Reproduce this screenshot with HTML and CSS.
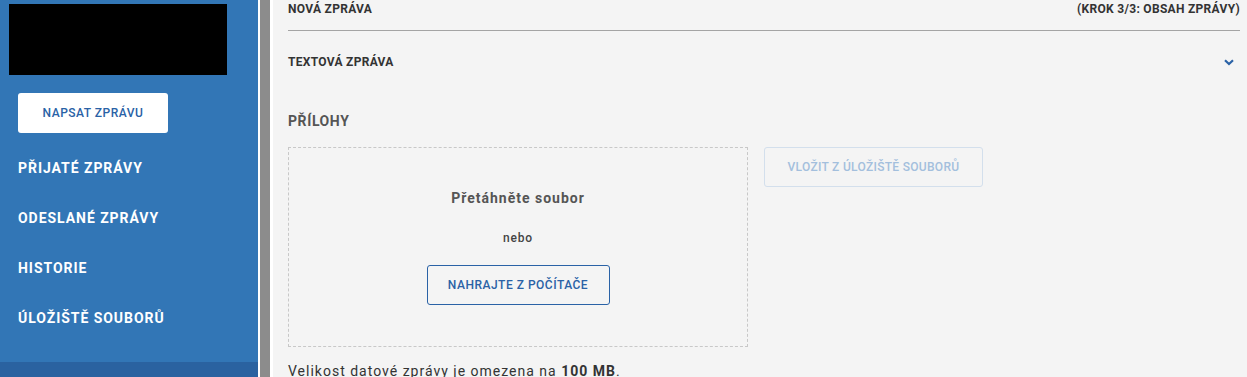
FILE: index.html
```html
<!DOCTYPE html>
<html lang="cs">
<head>
<meta charset="utf-8">
<link rel="stylesheet" href="styles.css">
</head>
<body>
<div class="app">
  <aside class="sidebar">
    <div class="logo"></div>
    <div class="compose-wrap"><button class="compose">NAPSAT ZPRÁVU</button></div>
    <nav class="nav">
      <a class="nav-item">PŘIJATÉ ZPRÁVY</a>
      <a class="nav-item">ODESLANÉ ZPRÁVY</a>
      <a class="nav-item">HISTORIE</a>
      <a class="nav-item">ÚLOŽIŠTĚ SOUBORŮ</a>
    </nav>
    <div class="sidebar-foot"></div>
  </aside>
  <div class="divider"><div class="divider-bar"></div></div>
  <main class="content">
    <div class="page-head">
      <span class="title">NOVÁ ZPRÁVA</span>
      <span class="step">(KROK 3/3: OBSAH ZPRÁVY)</span>
    </div>
    <div class="accordion">
      <span class="acc-title">TEXTOVÁ ZPRÁVA</span>
      <svg class="chev" width="10" height="7" viewBox="0 0 10 7"><path d="M1 1.2 L5 5 L9 1.2" fill="none" stroke="#2a62a6" stroke-width="2.2"/></svg>
    </div>
    <h2 class="section">PŘÍLOHY</h2>
    <div class="attach-row">
      <div class="dropzone">
        <div class="drop-title">Přetáhněte soubor</div>
        <div class="drop-or">nebo</div>
        <button class="btn-outline">NAHRAJTE Z POČÍTAČE</button>
      </div>
      <button class="btn-disabled">VLOŽIT Z ÚLOŽIŠTĚ SOUBORŮ</button>
    </div>
    <p class="note">Velikost datové zprávy je omezena na <b>100 MB</b>.</p>
  </main>
</div>
</body>
</html>
```
FILE: styles.css
```css
* { box-sizing: border-box; }
html, body { margin: 0; padding: 0; height: 100%; overflow: hidden; }
body { font-family: Roboto, "Liberation Sans", sans-serif; background: #f4f4f4; color: #333; }
.app { display: flex; height: 377px; }
.sidebar { width: 258px; flex: none; background: #3276b6; display: flex; flex-direction: column; }
.logo { width: 218px; height: 71px; background: #000; margin: 4px 0 0 9px; }
.compose-wrap { padding: 18px 0 0 18px; }
.compose { width: 150px; height: 40px; background: #fff; border: none; border-radius: 3px; color: #2a62a6; font: 500 12px Roboto, sans-serif; letter-spacing: 0.5px; padding: 0; }
.nav { display: flex; flex-direction: column; padding-top: 10px; }
.nav-item { display: block; height: 50px; line-height: 50px; padding-left: 18px; color: #fff; font-weight: 700; font-size: 14px; letter-spacing: 0.95px; }
.sidebar-foot { margin-top: auto; height: 15px; background: #2a62a0; }
.divider { width: 15px; flex: none; background: #fff; padding: 0 3px 0 2px; }
.divider-bar { height: 100%; background: #8c8c8c; }
.content { flex: 1; padding: 0 7px 0 15px; }
.page-head { display: flex; justify-content: space-between; align-items: flex-start; height: 31px; padding-top: 2px; border-bottom: 1px solid #a4a4a4; font-size: 12px; line-height: 14px; font-weight: 700; letter-spacing: 0.3px; color: #333; }
.accordion { display: flex; justify-content: space-between; align-items: center; height: 62px; font-size: 12px; font-weight: 700; letter-spacing: 0.3px; color: #333; padding-right: 6px; }
.section { margin: 20px 0 0; font-size: 14px; font-weight: 700; color: #555; letter-spacing: 0.6px; line-height: 16px; }
.attach-row { display: flex; align-items: flex-start; gap: 16px; margin-top: 18px; }
.dropzone { width: 460px; height: 200px; border: 1px dashed #c8c8c8; display: flex; flex-direction: column; align-items: center; padding-top: 42px; }
.drop-title { font-size: 14px; font-weight: 700; color: #555; letter-spacing: 1px; }
.drop-or { margin-top: 25px; font-size: 12px; font-weight: 500; color: #444; letter-spacing: 0.8px; }
.btn-outline { margin-top: 20px; width: 183px; height: 40px; background: transparent; border: 1px solid #2a62a6; border-radius: 3px; color: #2a62a6; font: 500 12px Roboto, sans-serif; letter-spacing: 0.5px; }
.btn-disabled { width: 219px; height: 40px; background: transparent; border: 1px solid #d3dfec; border-radius: 3px; color: #a3bfdd; font: 500 12px Roboto, sans-serif; letter-spacing: 0.3px; }
.note { margin: 16px 0 0; font-size: 14px; color: #333; letter-spacing: 1px; }
.note b { font-weight: 700; }
```
